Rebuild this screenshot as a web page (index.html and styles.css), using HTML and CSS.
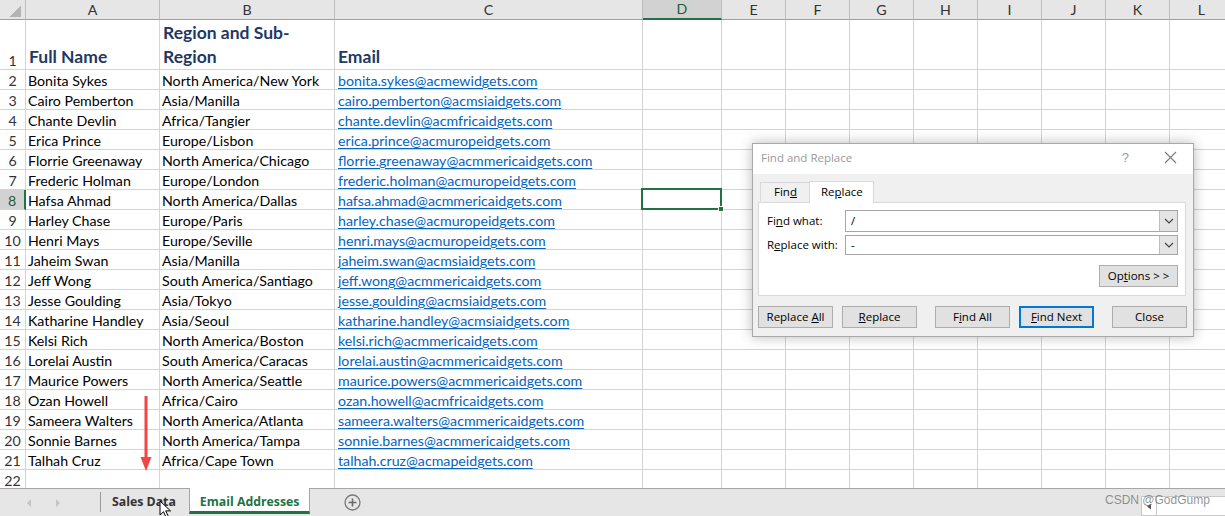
FILE: index.html
```html
<!DOCTYPE html>
<html lang="en">
<head>
<meta charset="utf-8">
<title>Email Addresses - Find and Replace</title>
<link rel="stylesheet" href="styles.css">
</head>
<body>
<div class="app">
  <div class="sheet">
    <div class="grid">
      <div class="corner"></div><div class="ch">A</div><div class="ch">B</div><div class="ch">C</div><div class="ch ch-on">D</div><div class="ch">E</div><div class="ch">F</div><div class="ch">G</div><div class="ch">H</div><div class="ch">I</div><div class="ch">J</div><div class="ch">K</div><div class="ch">L</div>

      <div class="rh rh-tall">1</div><div class="hd">Full Name</div><div class="hd">Region and Sub-<br>Region</div><div class="hd">Email</div><span></span><span></span><span></span><span></span><span></span><span></span><span></span><span></span><span></span>

      <div class="rh">2</div><div>Bonita Sykes</div><div>North America/New York</div><div><a>bonita.sykes@acmewidgets.com</a></div><span></span><span></span><span></span><span></span><span></span><span></span><span></span><span></span><span></span>
      <div class="rh">3</div><div>Cairo Pemberton</div><div>Asia/Manilla</div><div><a>cairo.pemberton@acmsiaidgets.com</a></div><span></span><span></span><span></span><span></span><span></span><span></span><span></span><span></span><span></span>
      <div class="rh">4</div><div>Chante Devlin</div><div>Africa/Tangier</div><div><a>chante.devlin@acmfricaidgets.com</a></div><span></span><span></span><span></span><span></span><span></span><span></span><span></span><span></span><span></span>
      <div class="rh">5</div><div>Erica Prince</div><div>Europe/Lisbon</div><div><a>erica.prince@acmuropeidgets.com</a></div><span></span><span></span><span></span><span></span><span></span><span></span><span></span><span></span><span></span>
      <div class="rh">6</div><div>Florrie Greenaway</div><div>North America/Chicago</div><div><a>florrie.greenaway@acmmericaidgets.com</a></div><span></span><span></span><span></span><span></span><span></span><span></span><span></span><span></span><span></span>
      <div class="rh">7</div><div>Frederic Holman</div><div>Europe/London</div><div><a>frederic.holman@acmuropeidgets.com</a></div><span></span><span></span><span></span><span></span><span></span><span></span><span></span><span></span><span></span>
      <div class="rh rh-on">8</div><div>Hafsa Ahmad</div><div>North America/Dallas</div><div><a>hafsa.ahmad@acmmericaidgets.com</a></div><div class="sel"></div><span></span><span></span><span></span><span></span><span></span><span></span><span></span><span></span>
      <div class="rh">9</div><div>Harley Chase</div><div>Europe/Paris</div><div><a>harley.chase@acmuropeidgets.com</a></div><span></span><span></span><span></span><span></span><span></span><span></span><span></span><span></span><span></span>
      <div class="rh">10</div><div>Henri Mays</div><div>Europe/Seville</div><div><a>henri.mays@acmuropeidgets.com</a></div><span></span><span></span><span></span><span></span><span></span><span></span><span></span><span></span><span></span>
      <div class="rh">11</div><div>Jaheim Swan</div><div>Asia/Manilla</div><div><a>jaheim.swan@acmsiaidgets.com</a></div><span></span><span></span><span></span><span></span><span></span><span></span><span></span><span></span><span></span>
      <div class="rh">12</div><div>Jeff Wong</div><div>South America/Santiago</div><div><a>jeff.wong@acmmericaidgets.com</a></div><span></span><span></span><span></span><span></span><span></span><span></span><span></span><span></span><span></span>
      <div class="rh">13</div><div>Jesse Goulding</div><div>Asia/Tokyo</div><div><a>jesse.goulding@acmsiaidgets.com</a></div><span></span><span></span><span></span><span></span><span></span><span></span><span></span><span></span><span></span>
      <div class="rh">14</div><div>Katharine Handley</div><div>Asia/Seoul</div><div><a>katharine.handley@acmsiaidgets.com</a></div><span></span><span></span><span></span><span></span><span></span><span></span><span></span><span></span><span></span>
      <div class="rh">15</div><div>Kelsi Rich</div><div>North America/Boston</div><div><a>kelsi.rich@acmmericaidgets.com</a></div><span></span><span></span><span></span><span></span><span></span><span></span><span></span><span></span><span></span>
      <div class="rh">16</div><div>Lorelai Austin</div><div>South America/Caracas</div><div><a>lorelai.austin@acmmericaidgets.com</a></div><span></span><span></span><span></span><span></span><span></span><span></span><span></span><span></span><span></span>
      <div class="rh">17</div><div>Maurice Powers</div><div>North America/Seattle</div><div><a>maurice.powers@acmmericaidgets.com</a></div><span></span><span></span><span></span><span></span><span></span><span></span><span></span><span></span><span></span>
      <div class="rh">18</div><div>Ozan Howell</div><div>Africa/Cairo</div><div><a>ozan.howell@acmfricaidgets.com</a></div><span></span><span></span><span></span><span></span><span></span><span></span><span></span><span></span><span></span>
      <div class="rh">19</div><div>Sameera Walters</div><div>North America/Atlanta</div><div><a>sameera.walters@acmmericaidgets.com</a></div><span></span><span></span><span></span><span></span><span></span><span></span><span></span><span></span><span></span>
      <div class="rh">20</div><div>Sonnie Barnes</div><div>North America/Tampa</div><div><a>sonnie.barnes@acmmericaidgets.com</a></div><span></span><span></span><span></span><span></span><span></span><span></span><span></span><span></span><span></span>
      <div class="rh">21</div><div>Talhah Cruz</div><div>Africa/Cape Town</div><div><a>talhah.cruz@acmapeidgets.com</a></div><span></span><span></span><span></span><span></span><span></span><span></span><span></span><span></span><span></span>
      <div class="rh">22</div><span></span><span></span><span></span><span></span><span></span><span></span><span></span><span></span><span></span><span></span><span></span><span></span>
    </div>
  </div>

  <div class="tabbar">
    <div class="nav">
      <span class="tri tri-l"></span>
      <span class="tri tri-r"></span>
    </div>
    <div class="sep"></div>
    <div class="stab">Sales Data</div>
    <div class="stab stab-on">Email Addresses</div>
    <div class="addsheet">
      <svg width="17" height="17" viewBox="0 0 17 17"><circle cx="8.5" cy="8.5" r="7.5" fill="none" stroke="#7a7a7a" stroke-width="1.3"/><path d="M8.5 4.5v8M4.5 8.5h8" stroke="#6a6a6a" stroke-width="1.6"/></svg>
    </div>
    <div class="hscroll">
      <span class="hs-btn"><svg width="6" height="7" viewBox="0 0 6 7"><path d="M5 0.5 1 3.5 5 6.5z" fill="#555"/></svg></span>
    </div>
  </div>

  <div class="dlg">
    <div class="dlg-title">
      <span class="dlg-name">Find and Replace</span>
      <span class="dlg-help">?</span>
      <svg class="dlg-x" width="13" height="13" viewBox="0 0 13 13"><path d="M1 1l11 11M12 1L1 12" stroke="#7a7a7a" stroke-width="1.1"/></svg>
    </div>
    <div class="dlg-body">
      <div class="dtabs">
        <div class="dtab"><span>Fin<u>d</u></span></div>
        <div class="dtab dtab-on"><span>Re<u>p</u>lace</span></div>
      </div>
      <div class="panel">
        <div class="frow">
          <span class="flabel">Fi<u>n</u>d what:</span>
          <div class="combo"><span class="cval">/</span><span class="dd"><svg width="10" height="6" viewBox="0 0 10 6"><path d="M1 1l4 4 4-4" fill="none" stroke="#444" stroke-width="1.2"/></svg></span></div>
        </div>
        <div class="frow">
          <span class="flabel">R<u>e</u>place with:</span>
          <div class="combo"><span class="cval">-</span><span class="dd"><svg width="10" height="6" viewBox="0 0 10 6"><path d="M1 1l4 4 4-4" fill="none" stroke="#444" stroke-width="1.2"/></svg></span></div>
        </div>
        <div class="optrow">
          <div class="btn btn-opt"><span>Op<u>t</u>ions &gt; &gt;</span></div>
        </div>
      </div>
      <div class="btnrow">
        <div class="bgroup">
          <div class="btn"><span>Replace <u>A</u>ll</span></div>
          <div class="btn"><span><u>R</u>eplace</span></div>
        </div>
        <div class="bgroup">
          <div class="btn"><span>F<u>i</u>nd All</span></div>
          <div class="btn btn-def"><span><u>F</u>ind Next</span></div>
        </div>
        <div class="bgroup">
          <div class="btn"><span>Close</span></div>
        </div>
      </div>
    </div>
  </div>

  <svg class="redarrow" width="14" height="78" viewBox="0 0 14 78"><path d="M7 1v62" stroke="#f04646" stroke-width="3"/><path d="M1.5 62h11L7 76z" fill="#f04646"/></svg>

  <svg class="cursor" width="13" height="18" viewBox="0 0 13 18"><path d="M1 1v14l3.5-3.3 2.6 5.6 2.2-1-2.6-5.4h4.8z" fill="#fff" stroke="#000" stroke-width="1" stroke-linejoin="round"/></svg>

  <div class="watermark">CSDN @GodGump</div>
</div>
</body>
</html>
```

FILE: styles.css
```css
* { box-sizing: border-box; }

html, body {
  margin: 0;
  padding: 0;
  background: #fff;
}

body {
  width: 1225px;
  height: 516px;
  overflow: hidden;
  font-family: Lato, "Liberation Sans", sans-serif;
}

.app {
  position: relative;
  width: 1225px;
  height: 516px;
  display: flex;
  flex-direction: column;
  overflow: hidden;
}

/* ---------- sheet grid ---------- */
.sheet {
  flex: none;
  height: 488px;
  overflow: hidden;
}

.grid {
  display: grid;
  grid-template-columns: 26px 134px 175px 308px 79px repeat(8, 64px);
  grid-template-rows: 20px 50px repeat(21, 20px);
  width: 1234px;
}

.grid > * {
  display: flex;
  align-items: flex-end;
  min-width: 0;
  padding: 0 0 0 2px;
  border-right: 1px solid #d4d4d4;
  border-bottom: 1px solid #d4d4d4;
  font-size: 14.2px;
  line-height: 16px;
  color: #000;
  white-space: nowrap;
}

.grid a {
  color: #0563c1;
  text-decoration: underline;
  text-underline-offset: 2px;
  margin-left: 1px;
}

.corner {
  background:
    linear-gradient(135deg, transparent 50%, #b4b4b4 50%) no-repeat right 4px bottom 2px / 11px 11px,
    #e6e6e6;
}

.grid > .corner,
.grid > .ch {
  border-right: 1px solid #bcbcbc;
  border-bottom: 1px solid #9f9f9f;
}

.grid > .ch {
  background: #e6e6e6;
  justify-content: center;
  align-items: center;
  padding: 0;
  color: #333;
}

.grid > .ch-on {
  background: #d2d2d2;
  color: #1e5e3b;
  border-bottom: 2px solid #217346;
}

.grid > .rh {
  justify-content: center;
  padding: 0;
  color: #333;
}

.grid > .rh-on {
  background: #d2d2d2;
  color: #1e5e3b;
  border-right: 2px solid #217346;
}

.grid > .hd {
  font-weight: 700;
  font-size: 17.5px;
  line-height: 24px;
  color: #1f3864;
  padding-bottom: 0;
  padding-left: 3px;
}

.sel {
  position: relative;
}

.sel::before {
  content: "";
  position: absolute;
  left: -2px;
  top: -2px;
  right: -1px;
  bottom: -1px;
  border: 2px solid #217346;
}

.sel::after {
  content: "";
  position: absolute;
  right: -3px;
  bottom: -3px;
  width: 6px;
  height: 6px;
  background: #217346;
  border: 1px solid #fff;
  box-sizing: border-box;
}

/* ---------- sheet tabs ---------- */
.tabbar {
  flex: none;
  height: 28px;
  background: #e6e6e6;
  border-top: 1px solid #a6a6a6;
  display: flex;
  align-items: stretch;
  font-family: "Open Sans", "Noto Sans", sans-serif;
}

.nav {
  width: 100px;
  display: flex;
  align-items: center;
  padding-left: 27px;
  gap: 25px;
}

.tri {
  width: 0;
  height: 0;
  border-top: 4px solid transparent;
  border-bottom: 4px solid transparent;
}

.tri-l { border-right: 4px solid #c4c4c4; }
.tri-r { border-left: 4px solid #c4c4c4; }

.sep {
  width: 1px;
  background: #9a9a9a;
  margin: 3px 0 4px;
}

.stab {
  display: flex;
  align-items: center;
  padding: 0 13px 2px 11px;
  font-size: 12.3px;
  font-weight: 700;
  color: #333;
}

.stab-on {
  margin-top: -1px;
  margin-bottom: 2px;
  padding: 3px 10px 0 10px;
  background: #fff;
  color: #217346;
  border-left: 1px solid #a6a6a6;
  border-right: 1px solid #a6a6a6;
  border-bottom: 3px solid #217346;
}

.addsheet {
  display: flex;
  align-items: center;
  margin-left: 34px;
  padding-bottom: 1px;
}

.hscroll {
  margin-left: auto;
  align-self: flex-end;
  width: 84px;
  height: 20px;
  background: #fff;
  border: 1px solid #c8c8c8;
  border-right: 0;
  display: flex;
}

.hs-btn {
  width: 15px;
  border-right: 1px solid #c8c8c8;
  display: flex;
  align-items: center;
  justify-content: center;
}

/* ---------- dialog ---------- */
.dlg {
  position: absolute;
  left: 752px;
  top: 143px;
  width: 442px;
  height: 194px;
  border: 1px solid #a8a8a8;
  background: #f0f0f0;
  box-shadow: 0 0 12px rgba(0, 0, 0, 0.28);
  display: flex;
  flex-direction: column;
  font-family: "Open Sans", "Noto Sans", sans-serif;
  font-size: 11.5px;
  color: #000;
}

.dlg-title {
  flex: none;
  height: 30px;
  background: #fff;
  display: flex;
  align-items: center;
  padding: 0 16px 3px 8px;
}

.dlg-name {
  color: #999;
  font-size: 11.5px;
}

.dlg-help {
  margin-left: auto;
  margin-right: 35px;
  color: #9a9a9a;
  font-size: 13px;
  font-family: "Liberation Sans", sans-serif;
}

.dlg-body {
  flex: 1;
  padding: 0 7px 0 5px;
  display: flex;
  flex-direction: column;
}

.dtabs {
  height: 28px;
  display: flex;
  align-items: flex-end;
  padding-left: 2px;
  position: relative;
  z-index: 1;
}

.dtab {
  height: 19px;
  padding: 0 12px 1px 13px;
  border: 1px solid #d9d9d9;
  border-bottom: 0;
  display: flex;
  align-items: center;
  background: #f0f0f0;
  margin-bottom: 1px;
}

.dtab-on {
  height: 22px;
  margin-bottom: -1px;
  margin-left: -1px;
  background: #fff;
  padding: 0 10px 2px 11px;
}

.panel {
  height: 94px;
  background: #fff;
  border: 1px solid #d9d9d9;
  padding: 7px 7px 0 8px;
  display: flex;
  flex-direction: column;
  gap: 3px;
}

.frow {
  display: flex;
  align-items: center;
}

.flabel {
  width: 78px;
  flex: none;
  padding-bottom: 1px;
}

.combo {
  flex: 1;
  height: 22px;
  border: 1px solid #a6a6a6;
  display: flex;
  align-items: stretch;
}

.frow + .frow .combo {
  height: 20px;
}

.cval {
  flex: 1;
  padding: 0 0 1px 5px;
  display: flex;
  align-items: center;
}

.dd {
  width: 18px;
  background: #e4e4e4;
  border-left: 1px solid #bdbdbd;
  display: flex;
  align-items: center;
  justify-content: center;
}

.optrow {
  display: flex;
  justify-content: flex-end;
  margin-top: 7px;
}

.btn {
  width: 75px;
  height: 22px;
  background: #e1e1e1;
  border: 1px solid #adadad;
  display: flex;
  align-items: center;
  justify-content: center;
  padding-bottom: 2px;
  white-space: pre;
}

.btn-opt {
  width: 79px;
}

.btn-def {
  border: 2px solid #0078d7;
}

.btnrow {
  display: flex;
  gap: 18px;
  margin-top: 10px;
}

.bgroup {
  display: flex;
  gap: 9px;
}

/* ---------- overlays ---------- */
.redarrow {
  position: absolute;
  left: 139px;
  top: 395px;
}

.cursor {
  position: absolute;
  left: 159px;
  top: 500px;
}

.watermark {
  position: absolute;
  left: 1105px;
  top: 493px;
  font-family: "Liberation Sans", sans-serif;
  font-size: 12px;
  color: rgba(110, 110, 110, 0.75);
  pointer-events: none;
}
```
